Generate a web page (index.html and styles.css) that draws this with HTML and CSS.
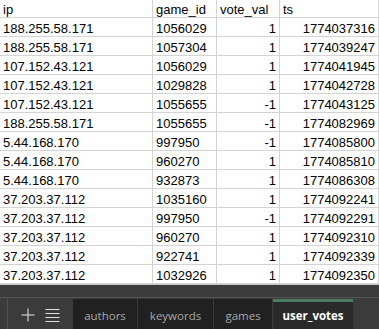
FILE: index.html
```html
<!DOCTYPE html>
<html>
<head>
<meta charset="utf-8">
<link rel="stylesheet" href="styles.css">
</head>
<body>
<div class="sheet">
  <div class="grid">
    <div class="c">ip</div><div class="c">game_id</div><div class="c">vote_val</div><div class="c">ts</div>
    <div class="c">188.255.58.171</div><div class="c">1056029</div><div class="c n">1</div><div class="c n">1774037316</div>
    <div class="c">188.255.58.171</div><div class="c">1057304</div><div class="c n">1</div><div class="c n">1774039247</div>
    <div class="c">107.152.43.121</div><div class="c">1056029</div><div class="c n">1</div><div class="c n">1774041945</div>
    <div class="c">107.152.43.121</div><div class="c">1029828</div><div class="c n">1</div><div class="c n">1774042728</div>
    <div class="c">107.152.43.121</div><div class="c">1055655</div><div class="c n">-1</div><div class="c n">1774043125</div>
    <div class="c">188.255.58.171</div><div class="c">1055655</div><div class="c n">-1</div><div class="c n">1774082969</div>
    <div class="c">5.44.168.170</div><div class="c">997950</div><div class="c n">-1</div><div class="c n">1774085800</div>
    <div class="c">5.44.168.170</div><div class="c">960270</div><div class="c n">1</div><div class="c n">1774085810</div>
    <div class="c">5.44.168.170</div><div class="c">932873</div><div class="c n">1</div><div class="c n">1774086308</div>
    <div class="c">37.203.37.112</div><div class="c">1035160</div><div class="c n">1</div><div class="c n">1774092241</div>
    <div class="c">37.203.37.112</div><div class="c">997950</div><div class="c n">-1</div><div class="c n">1774092291</div>
    <div class="c">37.203.37.112</div><div class="c">960270</div><div class="c n">1</div><div class="c n">1774092310</div>
    <div class="c">37.203.37.112</div><div class="c">922741</div><div class="c n">1</div><div class="c n">1774092339</div>
    <div class="c">37.203.37.112</div><div class="c">1032926</div><div class="c n">1</div><div class="c n">1774092350</div>
  </div>
</div>
<div class="scrollstrip"></div>
<div class="tabbar">
  <div class="lead"></div>
  <div class="tools">
    <svg class="ico" width="14" height="14" viewBox="0 0 14 14"><path d="M7 0.5V13.5M0.5 7H13.5" stroke="#e8e8e8" stroke-width="1" fill="none"/></svg>
    <svg class="ico" width="15" height="14" viewBox="0 0 15 14"><path d="M0.5 1.5H14.5M0.5 5.5H14.5M0.5 9.5H14.5M0.5 13.5H14.5" stroke="#e0e0e0" stroke-width="1" fill="none"/></svg>
  </div>
  <div class="tab t-authors">authors</div>
  <div class="tab t-keywords">keywords</div>
  <div class="tab t-games">games</div>
  <div class="tab t-votes active">user_votes</div>
  <div class="rest"></div>
</div>
</body>
</html>
```
FILE: styles.css
```css
html, body {
  margin: 0;
  padding: 0;
  background: #ffffff;
  overflow: hidden;
}
body {
  width: 379px;
  height: 329px;
  display: flex;
  flex-direction: column;
}
.sheet {
  height: 284px;
  overflow: hidden;
  background: #fff;
  flex: none;
}
.grid {
  margin-top: -1px;
  display: grid;
  grid-template-columns: 153px 64px 63px 1fr;
  grid-auto-rows: 19px;
  font-family: "Liberation Sans", Arial, sans-serif;
  font-size: 13px;
  color: #000;
}
.c {
  box-sizing: border-box;
  border-right: 1px solid #d4d4d4;
  border-bottom: 1px solid #d4d4d4;
  padding: 2px 3px 0 3px;
  line-height: 18px;
  white-space: nowrap;
}
.n {
  text-align: right;
}
.scrollstrip {
  background: #3c3c3c;
  border-top: 1px solid #c8c8c8;
  border-bottom: 1px solid #555555;
  box-sizing: border-box;
  flex: none;
  height: 14px;
}
.tabbar {
  flex: 1;
  display: flex;
  background: #3b3b3b;
  font-family: "Open Sans", "Noto Sans", sans-serif;
  font-size: 11.5px;
}
.lead {
  width: 7px;
  border-right: 1px solid #505050;
}
.tools {
  width: 64px;
  display: flex;
  align-items: center;
  gap: 10px;
  padding-left: 13px;
  box-sizing: border-box;
  padding-top: 2px;
}
.ico {
  display: block;
}
.tab {
  flex: none;
  box-sizing: border-box;
  background: #212121;
  color: #a8a8a8;
  padding-top: 3px;
  margin-left: 1px;
  margin-top: 1px;
  display: flex;
  align-items: center;
  justify-content: center;
  white-space: nowrap;
}
.t-authors { width: 64px; }
.t-keywords { width: 75px; }
.t-games { width: 58px; }
.t-votes { width: 80px; }
.tab.active {
  background: #2a2a2a;
  color: #ffffff;
  font-weight: bold;
  border-top: 3px solid #4e7c5e;
  padding-top: 0;
}
.rest {
  flex: 1;
  margin-left: 1px;
}
```
